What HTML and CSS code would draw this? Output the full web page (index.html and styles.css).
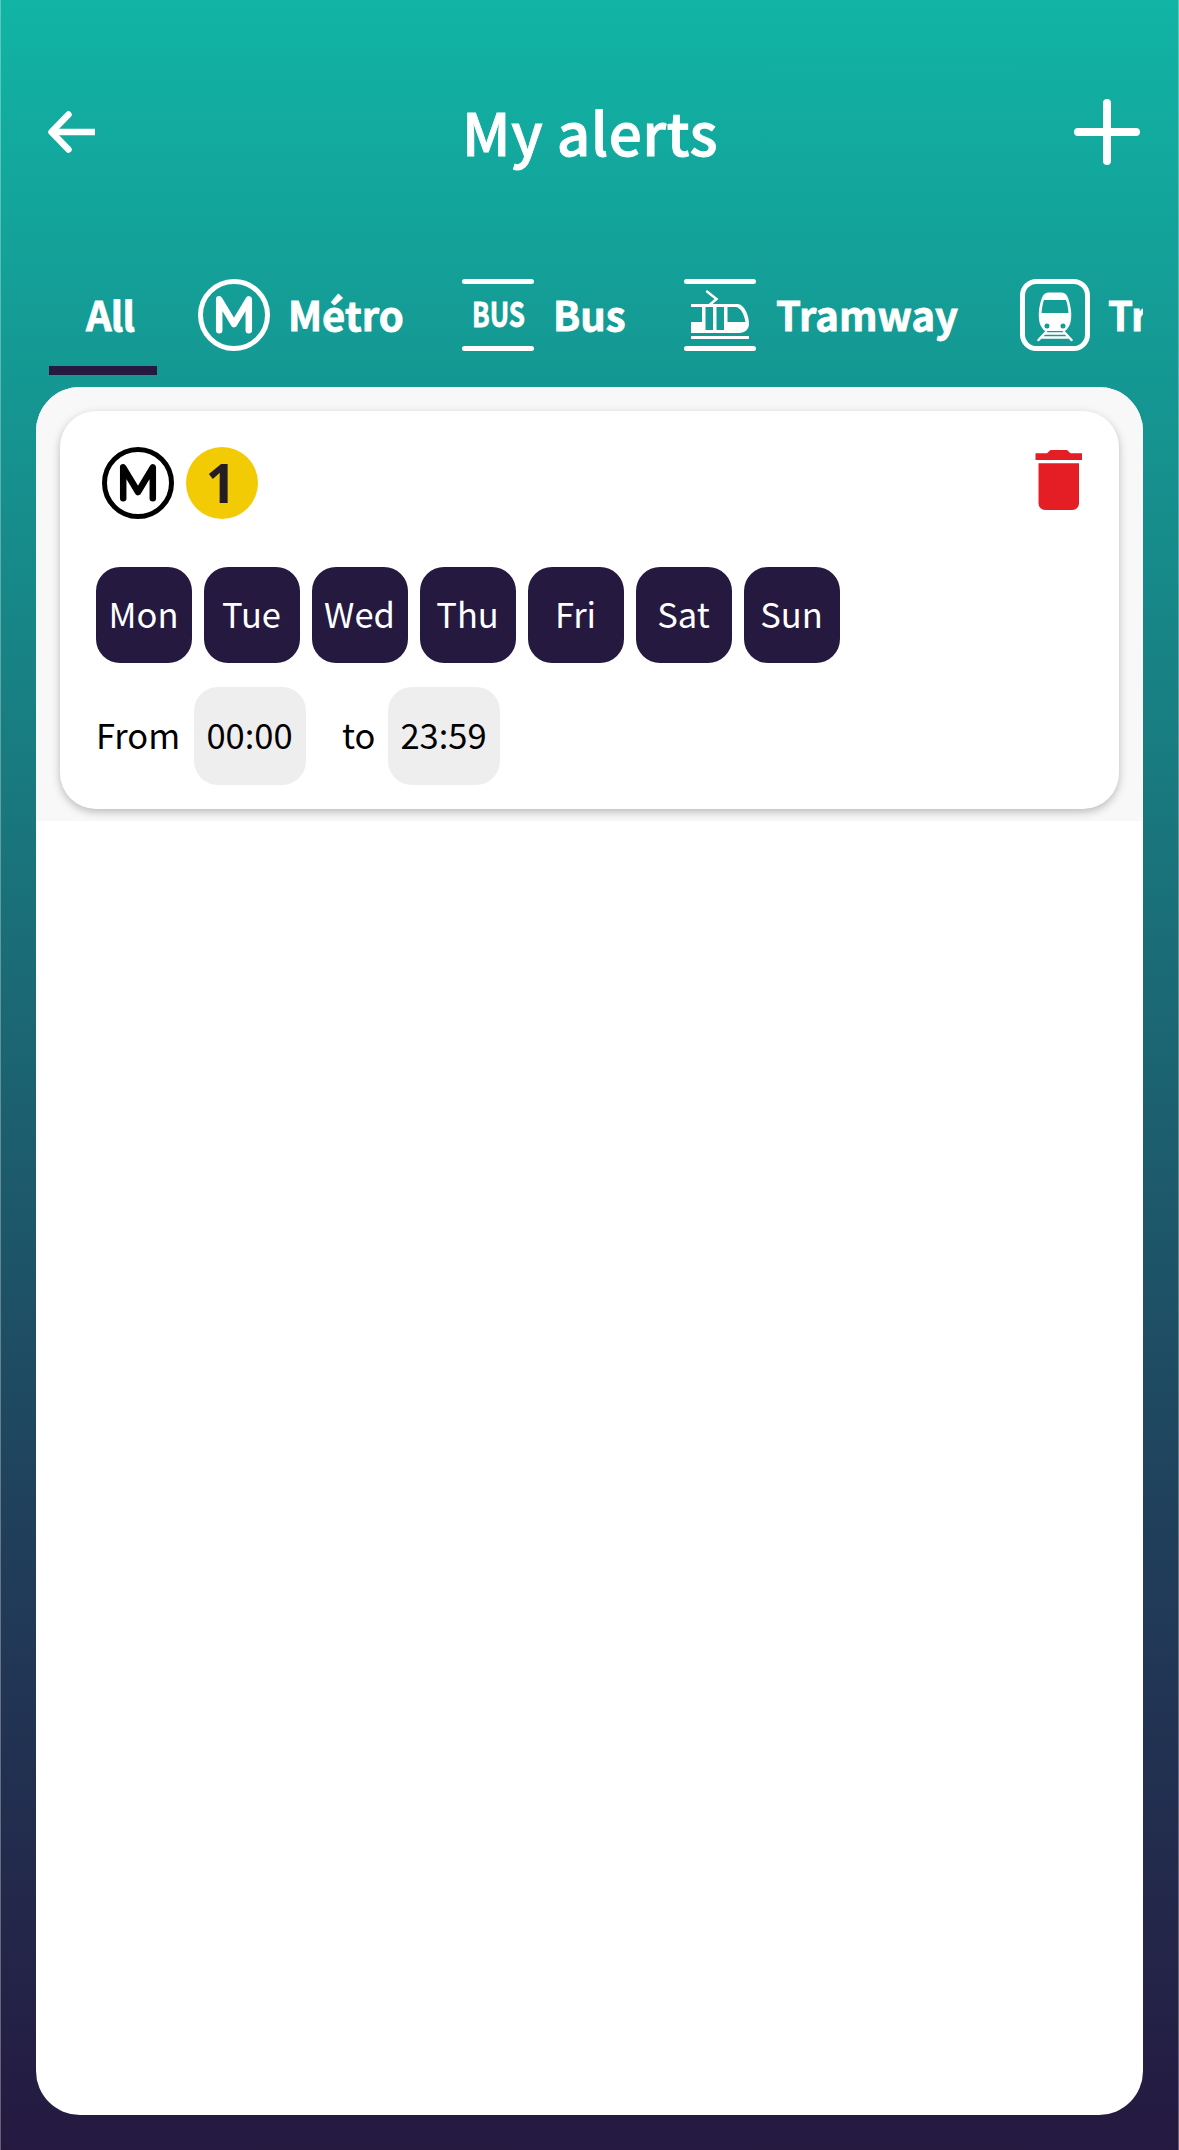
FILE: index.html
```html
<!DOCTYPE html>
<html lang="en">
<head>
<meta charset="utf-8">
<title>My alerts</title>
<link rel="stylesheet" href="styles.css">
</head>
<body>
<main class="app">
  <header class="header">
    <button class="icon-button" aria-label="Back">
      <svg width="48" height="42" viewBox="0 0 48 42" fill="none" stroke="#fff" stroke-width="6.500" stroke-linejoin="round"><path d="M3.500 21H47"/><path d="M20.500 3.500 3.500 21l17 17.500" stroke-linecap="round"/></svg>
    </button>
    <h1 class="title">My alerts</h1>
    <button class="icon-button" aria-label="Add alert">
      <svg width="66" height="66" viewBox="0 0 66 66"><path d="M33 4v58M4 33h58" stroke="#fff" stroke-width="8" stroke-linecap="round"/></svg>
    </button>
  </header>
  <nav class="tabs">
    <a class="tab tab-all"><span class="label">All</span></a>
    <a class="tab tab-metro">
      <svg width="72" height="72" viewBox="0 0 72 72" fill="none" stroke="currentColor"><circle cx="36" cy="36" r="33.500" stroke-width="5"/><path d="M21.200 51.300V20.300L36 45 50.800 20.300V51.300" stroke-width="6.500" stroke-linecap="round" stroke-linejoin="round"/></svg>
      <span class="label">Métro</span>
    </a>
    <a class="tab tab-bus">
      <svg width="72" height="72" viewBox="0 0 72 72"><path d="M2.500 2.500h67M2.500 69.500h67" stroke="#fff" stroke-width="5" stroke-linecap="round"/><text class="bus-text" x="10" y="48" textLength="53" lengthAdjust="spacingAndGlyphs">BUS</text></svg>
      <span class="label">Bus</span>
    </a>
    <a class="tab tab-tram">
      <svg width="72" height="72" viewBox="0 0 72 72"><path d="M2.500 2.500h67M2.500 69.500h67" stroke="#fff" stroke-width="5" stroke-linecap="round"/><path d="M23 12.500l9.500 7.500-7 6" fill="none" stroke="#fff" stroke-width="2.500" stroke-linecap="round"/><path fill="#fff" fill-rule="evenodd" d="M7 25H54C61 26 65 37 65 45C65 50 61 54 55 54H7V43H18V28H7ZM21.500 28V51H29V28ZM32.500 28V51H40V28ZM43.500 28V43H61.500C60 35 57 29 52 28Z"/><path d="M7 58.500H65" stroke="#fff" stroke-width="3"/></svg>
      <span class="label">Tramway</span>
    </a>
    <a class="tab tab-train">
      <svg width="70" height="72" viewBox="0 0 70 72"><rect x="2.500" y="2.500" width="65" height="67" rx="14" fill="none" stroke="#fff" stroke-width="5"/><path fill="#fff" fill-rule="evenodd" d="M28 13.500H42C47 14 49 19 51 31C52 42 50 48 45 52H25C20 48 18 42 19 31C21 19 23 14 28 13.500ZM24 21C22.500 25 22 29 21.500 34H48.500C48 29 47.500 25 46 21ZM27 44.500a2.500 2.500 0 1 0 0 5 2.500 2.500 0 0 0 0-5ZM43 44.500a2.500 2.500 0 1 0 0 5 2.500 2.500 0 0 0 0-5Z"/><path d="M26 53l-7.500 8M44 53l7.500 8M26 54.500h18M22 58.500h26" stroke="#fff" stroke-width="2.500" stroke-linecap="round"/></svg>
      <span class="label">Train</span>
    </a>
  </nav>
  <section class="panel">
    <div class="list">
      <article class="card">
        <div class="card-head">
          <svg width="72" height="72" viewBox="0 0 72 72" fill="none" stroke="currentColor"><circle cx="36" cy="36" r="33.500" stroke-width="5"/><path d="M21.200 51.300V20.300L36 45 50.800 20.300V51.300" stroke-width="6.500" stroke-linecap="round" stroke-linejoin="round"/></svg>
          <span class="line">1</span>
          <button class="icon-button delete" aria-label="Delete alert">
            <svg width="48" height="60" viewBox="0 0 48 60" fill="#e51e25"><path d="M.500 3.300H12L15.500 0H32L35.500 3.300H47V10H.500ZM3.500 13.300H44V53.500a6.500 6.500 0 0 1-6.500 6.500H10a6.500 6.500 0 0 1-6.500-6.500Z"/></svg>
          </button>
        </div>
        <div class="days">
          <span class="day">Mon</span><span class="day">Tue</span><span class="day">Wed</span><span class="day">Thu</span><span class="day">Fri</span><span class="day">Sat</span><span class="day">Sun</span>
        </div>
        <div class="hours">
          <span class="from">From</span><span class="time">00:00</span><span class="to">to</span><span class="time">23:59</span>
        </div>
      </article>
    </div>
  </section>
</main>
</body>
</html>
```
FILE: styles.css
```css
* { box-sizing: border-box; }

body {
  margin: 0;
  font-family: "Noto Sans CJK JP", "Noto Sans", sans-serif;
}

.app {
  height: 2150px;
  padding: 0 35px 35px;
  border: solid rgba(255, 255, 255, 0.3);
  border-width: 0 1px;
  background: linear-gradient(#11b4a5, #1b6874 47%, #203f5b 71%, #251940) border-box;
  display: flex;
  flex-direction: column;
  color: #fff;
}

.icon-button {
  padding: 0;
  border: 0;
  background: none;
  display: flex;
}

.header {
  height: 264px;
  padding: 0 3px 0 12px;
  display: grid;
  grid-template-columns: 66px 1fr 66px;
  align-items: center;
}

.title {
  margin: 0;
  padding: 0 8px 3px 0;
  font-size: 58.5px;
  font-weight: 500;
  line-height: 66px;
  letter-spacing: 0.4px;
  text-align: center;
  -webkit-text-stroke: 0.8px #fff;
}

.tabs {
  height: 123px;
  overflow: hidden;
  display: flex;
  align-items: flex-start;
  padding-left: 13px;
}

.tab {
  height: 111px;
  padding: 15px 0 24px;
  flex: none;
  display: flex;
  align-items: center;
  gap: 18px;
  font-size: 40px;
  font-weight: 700;
}

.label {
  height: 72px;
  line-height: 71px;
  -webkit-text-stroke: 0.8px #fff;
}

.tab-all {
  width: 108px;
  padding: 15px 0 15px 37px;
  border-bottom: 9px solid #251940;
  letter-spacing: -0.9px;
}

.tab-metro { width: 264px; padding-left: 41px; }
.tab-bus { width: 222px; padding-left: 41px; gap: 19px; }
.tab-tram { width: 336px; padding-left: 41px; gap: 20px; }
.tab-train { padding-left: 41px; }

.bus-text {
  font-size: 34px;
  fill: #fff;
  stroke: #fff;
  stroke-width: 0.8px;
}

.panel {
  flex: 1;
  border-radius: 44px;
  overflow: hidden;
  background: #fff;
}

.list {
  padding: 24px 24px 12px;
  background: #f8f8f8;
}

.card {
  height: 398px;
  padding: 36px;
  border-radius: 36px;
  background: #fff;
  box-shadow: 0 3px 8px rgba(0, 0, 0, 0.25);
  color: #000;
}

.card-head {
  display: flex;
  gap: 12px;
  padding-left: 6px;
  height: 120px;
}

.line {
  width: 72px;
  height: 72px;
  padding-right: 2px;
  border-radius: 50%;
  background: #f2cb05;
  color: #251d25;
  font: 700 53px/71px "Noto Sans", sans-serif;
  text-align: center;
}

.delete {
  height: 60px;
  margin: 3px 0 0 auto;
}

.days {
  display: flex;
  gap: 12px;
}

.day {
  width: 96px;
  height: 96px;
  padding-right: 1px;
  border-radius: 24px;
  background: #251940;
  color: #fff;
  font-size: 34.5px;
  line-height: 92px;
  text-align: center;
}

.hours {
  margin-top: 24px;
  display: flex;
  font-size: 34.5px;
  line-height: 94px;
}

.from { width: 98px; }

.time {
  width: 112px;
  height: 98px;
  padding-right: 1px;
  border-radius: 24px;
  background: #eee;
  text-align: center;
}

.to { width: 82px; padding-left: 36px; }
```
